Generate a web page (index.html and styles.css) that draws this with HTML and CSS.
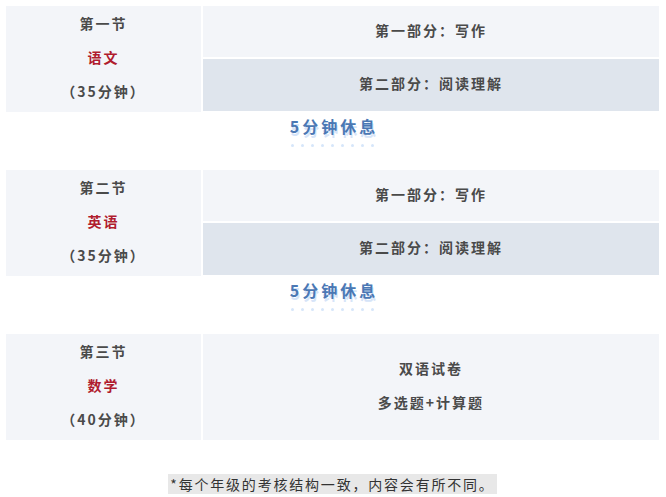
FILE: index.html
```html
<!DOCTYPE html>
<html lang="zh">
<head>
<meta charset="utf-8">
<link rel="stylesheet" href="styles.css">
</head>
<body>
<div class="page">
  <div class="section">
    <div class="left">
      <div class="line">第一节</div>
      <div class="line subject">语文</div>
      <div class="line">（35分钟）</div>
    </div>
    <div class="right">
      <div class="part light">第一部分：写作</div>
      <div class="part dark">第二部分：阅读理解</div>
    </div>
  </div>
  <div class="break">
    <div class="break-text">5分钟休息</div>
    <div class="dots"><i></i><i></i><i></i><i></i><i></i><i></i><i></i><i></i><i></i></div>
  </div>
  <div class="section">
    <div class="left">
      <div class="line">第二节</div>
      <div class="line subject">英语</div>
      <div class="line">（35分钟）</div>
    </div>
    <div class="right">
      <div class="part light">第一部分：写作</div>
      <div class="part dark">第二部分：阅读理解</div>
    </div>
  </div>
  <div class="break">
    <div class="break-text">5分钟休息</div>
    <div class="dots"><i></i><i></i><i></i><i></i><i></i><i></i><i></i><i></i><i></i></div>
  </div>
  <div class="section">
    <div class="left">
      <div class="line">第三节</div>
      <div class="line subject">数学</div>
      <div class="line">（40分钟）</div>
    </div>
    <div class="right single">
      <div class="line">双语试卷</div>
      <div class="line">多选题+计算题</div>
    </div>
  </div>
  <div class="note-wrap">
    <span class="note">*每个年级的考核结构一致，内容会有所不同。</span>
  </div>
</div>
</body>
</html>
```

FILE: styles.css
```css
html, body {
  margin: 0;
  padding: 0;
  background: #ffffff;
}
body {
  font-family: "Noto Sans CJK SC", "Noto Sans", sans-serif;
  color: #4a4a4a;
}
.page {
  width: 653px;
  padding: 6px 0 0 6px;
}
.section {
  display: grid;
  grid-template-columns: 195px 1fr;
  column-gap: 2px;
  height: 105px;
}
.left {
  background: #f3f5f9;
  display: flex;
  flex-direction: column;
  justify-content: center;
  align-items: center;
  padding-bottom: 4px;
  box-sizing: border-box;
}
.line {
  font-size: 14px;
  font-weight: bold;
  line-height: 34px;
  letter-spacing: 2px;
  color: #4a4a4a;
  text-align: center;
}
.subject {
  color: #b01c2e;
}
.right {
  display: grid;
  grid-template-rows: 51px 52px;
  row-gap: 2px;
}
.part {
  display: flex;
  align-items: center;
  justify-content: center;
  font-size: 14px;
  font-weight: bold;
  letter-spacing: 2px;
  color: #4a4a4a;
  padding-bottom: 4px;
  box-sizing: border-box;
}
.light {
  background: #f3f5f9;
}
.dark {
  background: #dfe5ed;
}
.right.single {
  display: flex;
  flex-direction: column;
  justify-content: center;
  align-items: center;
  background: #f3f5f9;
  padding-bottom: 4px;
  box-sizing: border-box;
}
.right.single .line {
  line-height: 32px;
}
.break {
  height: 59px;
  display: flex;
  flex-direction: column;
  align-items: center;
  padding-top: 4px;
  box-sizing: border-box;
}
.break-text {
  font-size: 16px;
  font-weight: bold;
  letter-spacing: 3px;
  line-height: 22px;
  color: #4b78b4;
  text-shadow: 1px 3px 0 #d6e4f8;
  margin-left: 3px;
}
.dots {
  display: flex;
  gap: 7px;
  margin-top: 7px;
}
.dots i {
  display: block;
  width: 3px;
  height: 3px;
  border-radius: 50%;
  background: #d6e6fa;
}
.note-wrap {
  text-align: center;
  padding-top: 32px;
}
.note {
  background: #e8e8e8;
  font-size: 14px;
  line-height: 18px;
  letter-spacing: 1.8px;
  color: #333333;
  padding: 0 2px;
}
```
